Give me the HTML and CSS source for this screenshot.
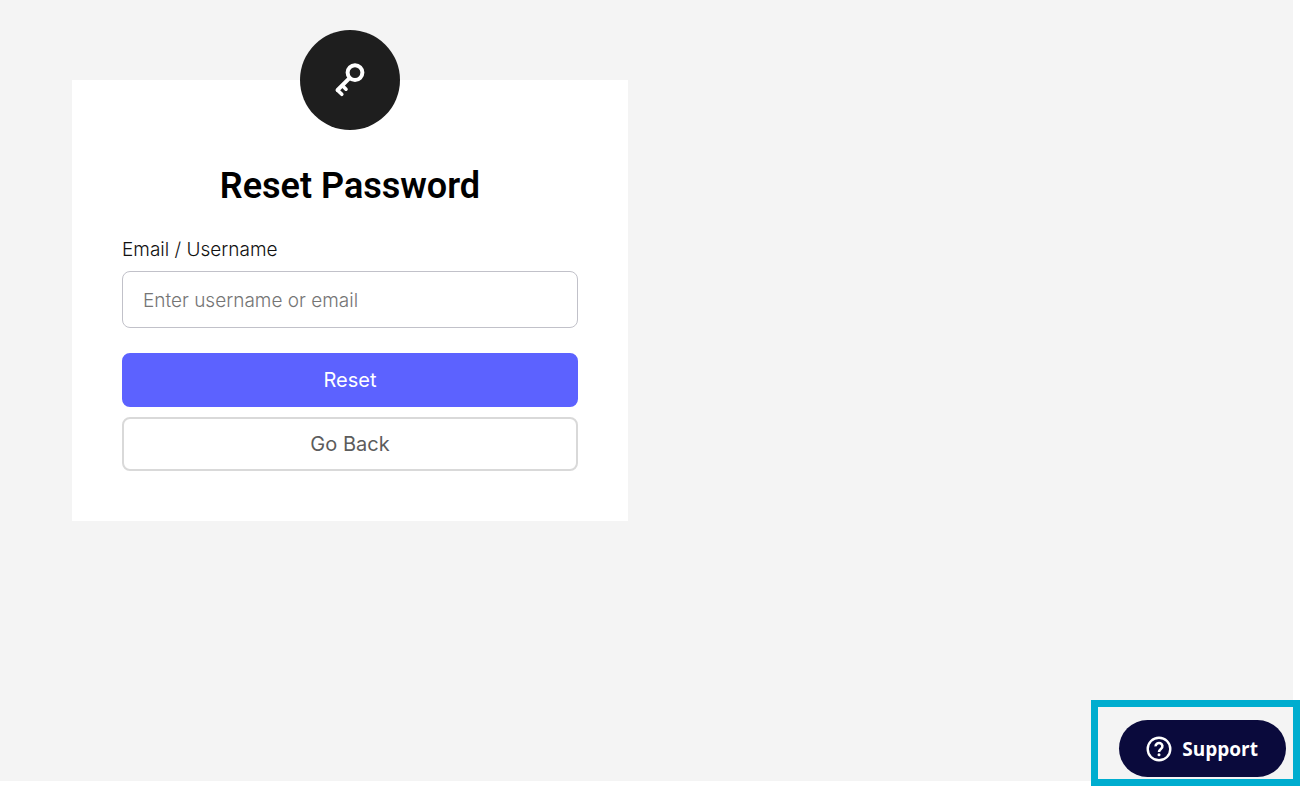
FILE: index.html
```html
<!DOCTYPE html>
<html lang="en">
<head>
<meta charset="utf-8">
<meta name="viewport" content="width=device-width, initial-scale=1">
<title>Reset Password</title>
<link rel="stylesheet" href="styles.css">
</head>
<body>
<main class="page">
  <form class="card">
    <div class="badge">
      <svg width="50" height="50" viewBox="0 0 50 50" fill="none" stroke="#fff" stroke-width="4" stroke-linecap="round" stroke-linejoin="round" aria-hidden="true">
        <circle cx="30" cy="17.6" r="7.4"/>
        <path d="M24.5 23.2 12.6 35"/>
        <path stroke-width="3.6" d="M12.6 35.3l4.2 4M17.8 31l3.2 3.2"/>
      </svg>
    </div>
    <h1 class="title">Reset Password</h1>
    <label class="label" for="user">Email / Username</label>
    <input class="field" id="user" type="text" placeholder="Enter username or email">
    <div class="actions">
      <button class="button button-primary" type="submit">Reset</button>
      <button class="button button-outline" type="button">Go Back</button>
    </div>
  </form>
</main>
<div class="highlight">
  <button class="support" type="button">
    <svg width="26" height="26" viewBox="0 0 26 26" fill="none" stroke="#fff" stroke-width="2.4" aria-hidden="true">
      <circle cx="13" cy="13" r="11.3"/>
      <path stroke-width="2.6" d="M9.6 10.4a3.4 3.2 0 1 1 5.5 2.3C13.7 13.9 13 14.4 13 15.9"/>
      <circle cx="13" cy="18.8" r="1.5" fill="#fff" stroke="none"/>
    </svg>
    Support
  </button>
</div>
</body>
</html>
```
FILE: styles.css
```css
* {
  box-sizing: border-box;
}

body {
  margin: 0;
  min-height: 100vh;
  display: flex;
  padding: 0 7px 6px 0;
  background: #fff;
  font-family: Inter, "Liberation Sans", sans-serif;
}

.page {
  flex: 1;
  padding: 80px 72px;
  background: #f4f4f4;
}

.card {
  display: flex;
  flex-direction: column;
  width: 100%;
  max-width: 556px;
  padding: 0 50px 50px;
  background: #fff;
}

.badge {
  display: flex;
  align-items: center;
  justify-content: center;
  align-self: center;
  width: 100px;
  height: 100px;
  margin-top: -50px;
  border-radius: 50%;
  background: #1e1e1e;
}

.title {
  margin: 34px 0 30px;
  font-family: Roboto, sans-serif;
  font-size: 36px;
  font-weight: 600;
  line-height: 44px;
  text-align: center;
  color: #000;
}

.label {
  margin-bottom: 10px;
  font-size: 19px;
  font-weight: 300;
  line-height: 23px;
  color: #111;
}

.field {
  width: 100%;
  height: 57px;
  padding: 1px 20px 0;
  border: 1px solid #c1c1c9;
  border-radius: 8px;
  background: #fff;
  font: 300 19px Inter, sans-serif;
  color: #111;
}

.field::placeholder {
  color: #757575;
}

.actions {
  display: flex;
  flex-direction: column;
  gap: 10px;
  margin-top: 25px;
}

.button {
  height: 54px;
  border: 2px solid #5c62ff;
  border-radius: 8px;
  font: 400 20px Inter, sans-serif;
}

.button-primary {
  background: #5c62ff;
  color: #fff;
}

.button-outline {
  border-color: #d9d9d9;
  background: #fff;
  color: #5c5c5c;
}

.highlight {
  position: fixed;
  right: 0;
  bottom: 1px;
  padding: 13px 7px 2px 21px;
  border: 7px solid #00adcf;
}

.support {
  display: flex;
  align-items: center;
  gap: 10px;
  height: 57px;
  padding: 0 28px 0 27px;
  border: 0;
  border-radius: 29px;
  background: #0a0a3c;
  color: #fff;
  font: 700 19px "Open Sans", sans-serif;
}
```
